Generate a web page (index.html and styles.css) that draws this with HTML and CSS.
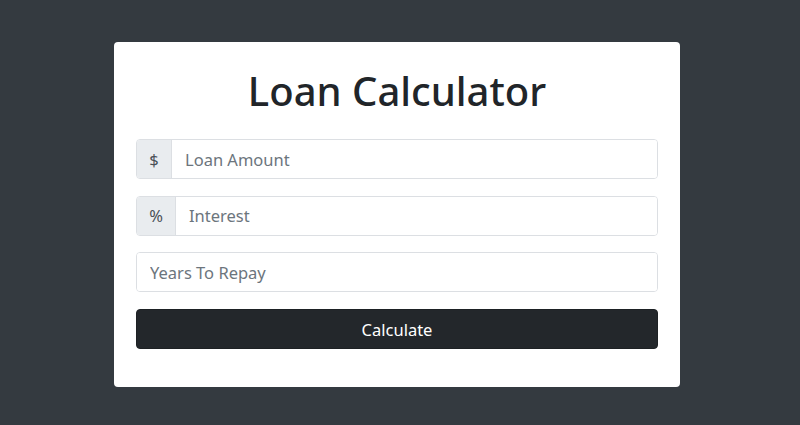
FILE: index.html
```html
<!DOCTYPE html>
<html lang="en">
<head>
    <meta charset="UTF-8">
    <meta name="viewport" content="width=device-width, initial-scale=1.0">
    <title>Loan Calculator</title>
    <link rel="stylesheet" href="styles.css">
</head>
<body>
    <div class="wrap">
        <div class="card">
            <h1 class="title">Loan Calculator</h1>
            <form id="loanForm" class="loan-form">
                <div class="input-group">
                    <span class="addon">$</span>
                    <input type="number" id="amount" class="field" placeholder="Loan Amount">
                </div>
                <div class="input-group">
                    <span class="addon addon-wide">%</span>
                    <input type="number" id="interest" class="field" placeholder="Interest">
                </div>
                <div class="input-group">
                    <input type="number" id="years" class="field" placeholder="Years To Repay">
                </div>
                <button type="submit" class="btn">Calculate</button>
            </form>
        </div>
    </div>
</body>
</html>
```

FILE: styles.css
```css
* {
    box-sizing: border-box;
}

body {
    margin: 0;
    background-color: #343a40;
    font-family: "Noto Sans", "Open Sans", sans-serif;
    color: #212529;
}

.wrap {
    display: flex;
    justify-content: center;
    padding: 42px 6px 0 0;
}

.card {
    width: 566px;
    background: #fff;
    border-radius: 4px;
    padding: 22px 22px 38px;
}

.title {
    margin: 0 0 22px;
    text-align: center;
    font-size: 40px;
    font-weight: 500;
    line-height: 53px;
}

.loan-form {
    display: flex;
    flex-direction: column;
    gap: 16.7px;
}

.input-group {
    display: flex;
    height: 40px;
    border: 1px solid #dcdfe3;
    border-radius: 4px;
    overflow: hidden;
}

.addon {
    display: flex;
    align-items: center;
    justify-content: center;
    width: 35px;
    background: #e9ecef;
    border-right: 1px solid #dcdfe3;
    font-size: 16.5px;
    color: #495057;
}

.addon-wide {
    width: 39px;
}

.field {
    flex: 1;
    border: none;
    padding: 0 13px;
    font-family: inherit;
    font-size: 16.5px;
    color: #495057;
    outline: none;
}

.field::placeholder {
    color: #6c757d;
}

.btn {
    height: 40px;
    border: 1px solid #1d2124;
    border-radius: 4px;
    background: #23272b;
    color: #fff;
    font-family: inherit;
    font-size: 16.5px;
    cursor: pointer;
}
```
